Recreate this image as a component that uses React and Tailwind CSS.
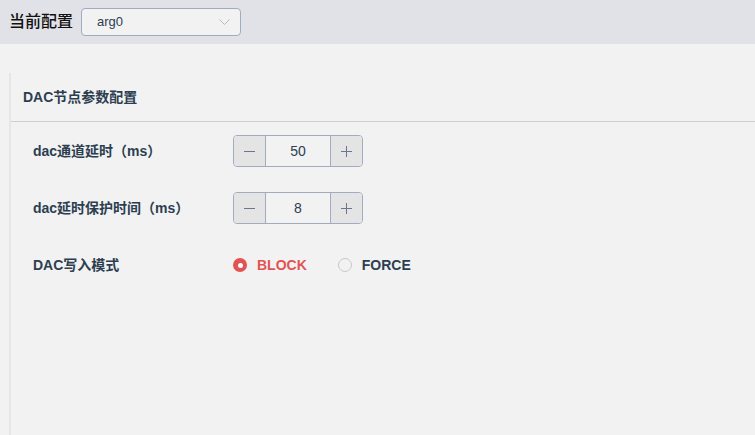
import { useState } from "react";

const font = "font-['Liberation_Sans','Noto_Sans_CJK_SC',sans-serif]";

function Stepper({ value, onChange }) {
  return (
    <div className="flex h-[32px] w-[130px] rounded-[4px] border border-[#a3abc2] overflow-hidden">
      <button
        onClick={() => onChange(value - 1)}
        className="w-[32px] flex items-center justify-center bg-[#e4e4e4] border-r border-[#a3abc2]"
      >
        <span className="block w-[11px] h-[1px] bg-[#6b7590]" />
      </button>
      <div className="flex-1 flex items-center justify-center text-[14px] text-[#2c3e50] bg-[#f2f2f2]">
        {value}
      </div>
      <button
        onClick={() => onChange(value + 1)}
        className="w-[32px] flex items-center justify-center bg-[#e4e4e4] border-l border-[#a3abc2]"
      >
        <svg width="11" height="11" viewBox="0 0 11 11">
          <path d="M5.5 0v11M0 5.5h11" stroke="#6b7590" strokeWidth="1" />
        </svg>
      </button>
    </div>
  );
}

function Radio({ checked, label, onClick }) {
  return (
    <button onClick={onClick} className="flex items-center gap-[10px]">
      {checked ? (
        <span className="w-[14px] h-[14px] rounded-full bg-[#e35353] flex items-center justify-center">
          <span className="w-[5px] h-[5px] rounded-full bg-white" />
        </span>
      ) : (
        <span className="w-[14px] h-[14px] rounded-full border border-[#c8c8c8] bg-[#f2f2f2]" />
      )}
      <span className={`text-[14px] font-bold ${checked ? "text-[#e35353]" : "text-[#2c3e50]"}`}>
        {label}
      </span>
    </button>
  );
}

export default function App() {
  const [delay, setDelay] = useState(50);
  const [protect, setProtect] = useState(8);
  const [mode, setMode] = useState("BLOCK");

  return (
    <div className={`w-[755px] h-[435px] bg-[#f2f2f2] flex flex-col overflow-hidden ${font}`}>
      {/* Top bar */}
      <div className="h-[44px] shrink-0 bg-[#e1e2e8] flex items-center pl-[9px] gap-[8px]">
        <span className="text-[16px] font-medium text-[#111]">当前配置</span>
        <div className="w-[160px] h-[28px] rounded-[4px] border border-[#a3abc2] bg-[#f2f2f2] flex items-center justify-between pl-[15px] pr-[10px]">
          <span className="text-[13px] text-[#2c3e50]">arg0</span>
          <svg width="11" height="7" viewBox="0 0 11 7">
            <path d="M0.5 0.5l5 5 5-5" fill="none" stroke="#b4b9c8" strokeWidth="1" />
          </svg>
        </div>
      </div>

      {/* Panel */}
      <div className="flex-1 pt-[29px] pl-[9px]">
        <div className="h-full border-l-2 border-[#e6e6e6]">
          <div className="h-[49px] flex items-center pl-[12px] border-b border-[#cfcfcf]">
            <span className="text-[14px] font-bold text-[#2c3e50]">DAC节点参数配置</span>
          </div>
          <div className="pl-[22px] pt-[13px] flex flex-col gap-[25px]">
            <div className="flex items-center h-[32px]">
              <span className="w-[200px] text-[14px] font-bold text-[#2c3e50]">dac通道延时（ms）</span>
              <Stepper value={delay} onChange={setDelay} />
            </div>
            <div className="flex items-center h-[32px]">
              <span className="w-[200px] text-[14px] font-bold text-[#2c3e50]">dac延时保护时间（ms）</span>
              <Stepper value={protect} onChange={setProtect} />
            </div>
            <div className="flex items-center h-[32px]">
              <span className="w-[200px] text-[14px] font-bold text-[#2c3e50]">DAC写入模式</span>
              <div className="flex items-center gap-[31px]">
                <Radio checked={mode === "BLOCK"} label="BLOCK" onClick={() => setMode("BLOCK")} />
                <Radio checked={mode === "FORCE"} label="FORCE" onClick={() => setMode("FORCE")} />
              </div>
            </div>
          </div>
        </div>
      </div>
    </div>
  );
}
